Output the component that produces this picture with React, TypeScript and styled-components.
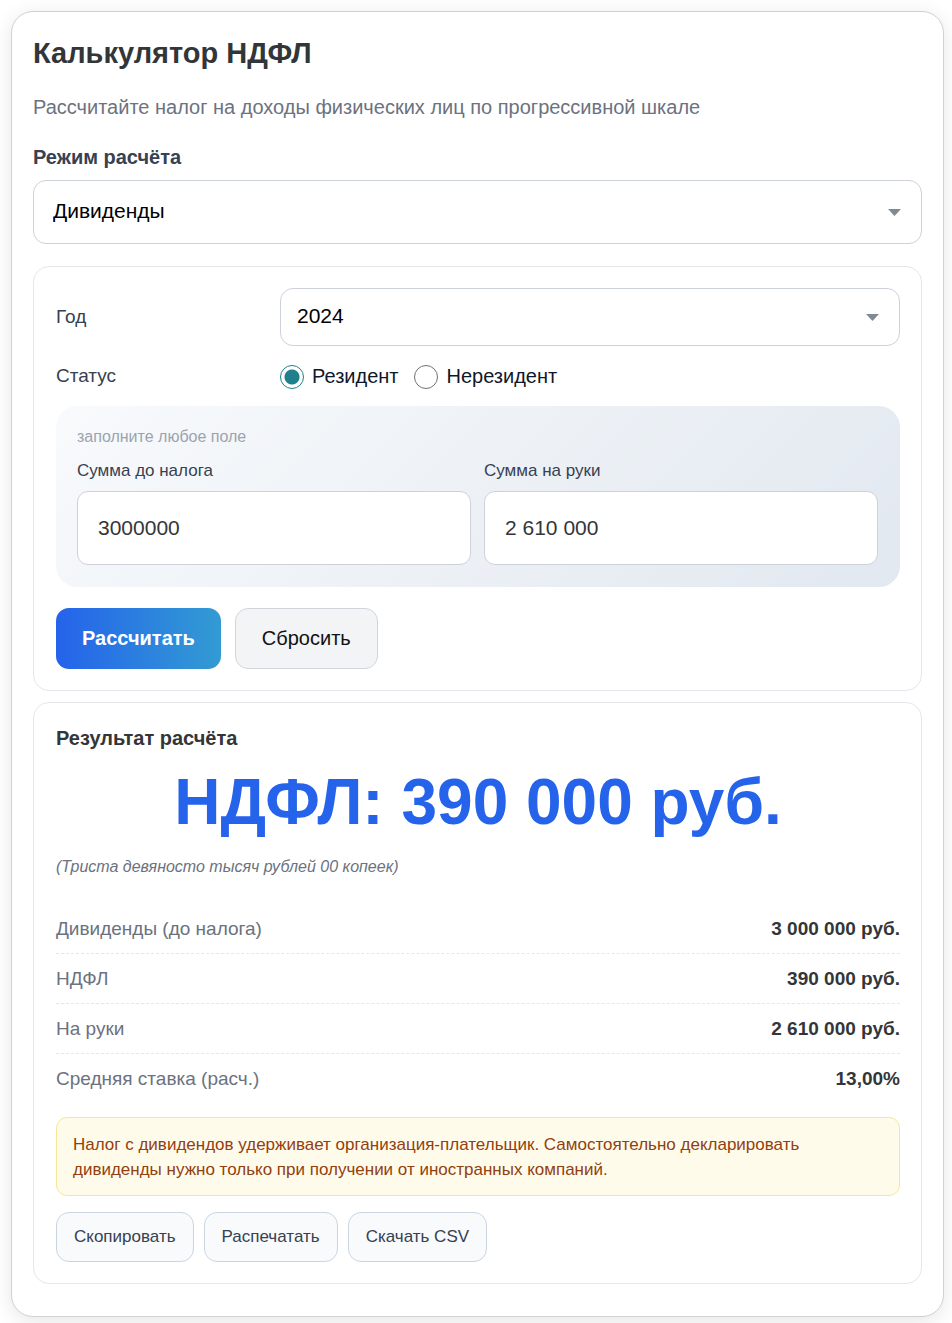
import React, { useState } from 'react';
import styled, { createGlobalStyle } from 'styled-components';

const GlobalStyle = createGlobalStyle`
  *, *::before, *::after { box-sizing: border-box; }
  body {
    margin: 0;
    background: #fff;
    color: #333639;
    font-family: "Liberation Sans", Arial, sans-serif;
  }
  button, input, select { font: inherit; }
`;

const Page = styled.div`
  padding: 11px 8px 6px 11px;
`;

const Card = styled.main`
  padding: 21px 21px 32px;
  background: #fff;
  border: 1px solid #cfd2d4;
  border-radius: 22px;
  box-shadow: 0 4px 20px rgba(0, 0, 0, 0.1);
`;

const Title = styled.h1`
  margin: 0;
  font-size: 29px;
  line-height: 40px;
  font-weight: 700;
`;

const Subtitle = styled.p`
  margin: 20px 0 0;
  color: #6b7280;
  font-size: 20px;
  line-height: 28px;
`;

const ModeField = styled.div`
  display: flex;
  flex-direction: column;
  gap: 10px;
  margin: 23px 0 22px;
`;

const ModeLabel = styled.label`
  color: #374151;
  font-size: 20px;
  line-height: 26px;
  font-weight: 700;
`;

const SelectBox = styled.div`
  position: relative;
`;

const Select = styled.select<{ $large?: boolean }>`
  appearance: none;
  display: block;
  width: 100%;
  height: ${(p) => (p.$large ? 64 : 58)}px;
  padding: 0 48px 4px ${(p) => (p.$large ? 19 : 16)}px;
  background: #fff;
  color: #000;
  border: 1px solid #cdd1da;
  border-radius: 13px;
  font-size: 21px;
`;

const Arrow = styled.svg`
  position: absolute;
  top: 50%;
  right: 21px;
  width: 13px;
  height: 7px;
  margin-top: -3px;
  fill: #7f8a93;
  pointer-events: none;
`;

const Panel = styled.section`
  padding: 21px;
  padding-left: 22px;
  border: 1px solid #e5e7eb;
  border-radius: 16px;

  & + & {
    margin-top: 11px;
  }
`;

const FormRow = styled.div`
  display: grid;
  grid-template-columns: 210px 1fr;
  gap: 14px;
  align-items: center;
`;

const RowLabel = styled.label`
  color: #374151;
  font-size: 19px;
  line-height: 24px;
`;

const Status = styled.div`
  margin: 17px 0;
`;

const RadioGroup = styled.div`
  display: flex;
  flex-wrap: wrap;
  gap: 16px;
`;

const RadioLabel = styled.label`
  display: flex;
  align-items: flex-end;
  gap: 8px;
  color: #0f172a;
  font-size: 20px;
  line-height: 26px;
`;

const Radio = styled.input`
  appearance: none;
  flex: none;
  width: 24px;
  height: 24px;
  margin: 0;
  background: #fff;
  border: 1px solid #6f7175;
  border-radius: 50%;

  &:checked {
    border-color: #21808d;
    background: radial-gradient(circle, #21808d 7px, #fff 8px);
  }
`;

const Amounts = styled.fieldset`
  margin: 0;
  min-width: 0;
  padding: 21px 22px 22px 21px;
  border: 0;
  border-radius: 21px;
  background: linear-gradient(135deg, #f8fafc, #e2e8f0);
`;

const Hint = styled.p`
  margin: 0 0 13px;
  color: #9ca3af;
  font-size: 16px;
  line-height: 20px;
`;

const AmountGrid = styled.div`
  display: grid;
  grid-template-columns: 1fr 1fr;
  gap: 13px;
`;

const AmountLabel = styled.label`
  display: flex;
  flex-direction: column;
  gap: 9px;
  color: #374151;
  font-size: 17px;
  line-height: 22px;
`;

const AmountInput = styled.input`
  width: 100%;
  height: 74px;
  padding: 0 20px;
  background: #fff;
  color: #333639;
  border: 1px solid #cdd1da;
  border-radius: 11px;
  font-size: 21px;
`;

const Actions = styled.div`
  display: flex;
  flex-wrap: wrap;
  gap: 14px;
  margin-top: 21px;
`;

const Button = styled.button<{ $primary?: boolean }>`
  height: 61px;
  padding: 0 26px;
  border: ${(p) => (p.$primary ? '0' : '1px solid #d1d5db')};
  border-radius: 13px;
  background: ${(p) => (p.$primary ? 'linear-gradient(90deg, #2563eb, #329bd3)' : '#f3f4f6')};
  color: ${(p) => (p.$primary ? '#fff' : '#111')};
  font-size: 20px;
  font-weight: ${(p) => (p.$primary ? 700 : 400)};
  cursor: pointer;
`;

const ResultTitle = styled.h2`
  margin: 0;
  font-size: 20px;
  line-height: 28px;
`;

const Total = styled.p`
  margin: 12px 0 0;
  color: #2563eb;
  font-size: 64px;
  line-height: 76px;
  font-weight: 700;
  text-align: center;
`;

const InWords = styled.p`
  margin: 16px 0 0;
  color: #6b7280;
  font-size: 16px;
  line-height: 22px;
  font-style: italic;
`;

const Breakdown = styled.dl`
  margin: 26px 0 0;
`;

const BreakdownRow = styled.div`
  display: flex;
  justify-content: space-between;
  align-items: center;
  padding: 12px 0;
  font-size: 19px;
  line-height: 25px;

  & + & {
    border-top: 1px dashed #e5e7eb;
  }
`;

const Term = styled.dt`
  color: #6b7280;
`;

const Value = styled.dd`
  margin: 0;
  font-weight: 700;
`;

const Notice = styled.p`
  margin: 14px 0 16px;
  padding: 14px 16px 13px;
  background: #fffbeb;
  color: #92400e;
  border: 1px solid #f7e59a;
  border-radius: 11px;
  font-size: 17px;
  line-height: 25px;
`;

const ExportBar = styled.div`
  display: flex;
  flex-wrap: wrap;
  gap: 10px;
`;

const ExportButton = styled.button`
  height: 50px;
  padding: 0 17px;
  background: #f8fafc;
  color: #374151;
  border: 1px solid #cbd5e1;
  border-radius: 13px;
  font-size: 17px;
  cursor: pointer;
`;

const rows = [
  ['Дивиденды (до налога)', '3 000 000 руб.'],
  ['НДФЛ', '390 000 руб.'],
  ['На руки', '2 610 000 руб.'],
  ['Средняя ставка (расч.)', '13,00%'],
];

function DropArrow() {
  return (
    <Arrow viewBox="0 0 13 7" aria-hidden="true">
      <path d="M0 0H13L6.500 7Z" />
    </Arrow>
  );
}

export default function App() {
  const [status, setStatus] = useState('resident');
  const [gross, setGross] = useState('3000000');
  const [net, setNet] = useState('2 610 000');

  return (
    <>
      <GlobalStyle />
      <Page>
        <Card>
          <Title>Калькулятор НДФЛ</Title>
          <Subtitle>Рассчитайте налог на доходы физических лиц по прогрессивной шкале</Subtitle>
          <ModeField>
            <ModeLabel htmlFor="mode">Режим расчёта</ModeLabel>
            <SelectBox>
              <Select id="mode" $large>
                <option>Дивиденды</option>
              </Select>
              <DropArrow />
            </SelectBox>
          </ModeField>

          <Panel>
            <FormRow>
              <RowLabel htmlFor="year">Год</RowLabel>
              <SelectBox>
                <Select id="year">
                  <option>2024</option>
                </Select>
                <DropArrow />
              </SelectBox>
            </FormRow>
            <Status>
              <FormRow>
                <RowLabel as="span" id="status-label">Статус</RowLabel>
                <RadioGroup role="radiogroup" aria-labelledby="status-label">
                  <RadioLabel>
                    <Radio
                      type="radio"
                      name="status"
                      checked={status === 'resident'}
                      onChange={() => setStatus('resident')}
                    />
                    Резидент
                  </RadioLabel>
                  <RadioLabel>
                    <Radio
                      type="radio"
                      name="status"
                      checked={status === 'nonresident'}
                      onChange={() => setStatus('nonresident')}
                    />
                    Нерезидент
                  </RadioLabel>
                </RadioGroup>
              </FormRow>
            </Status>
            <Amounts>
              <Hint>заполните любое поле</Hint>
              <AmountGrid>
                <AmountLabel>
                  Сумма до налога
                  <AmountInput type="text" value={gross} onChange={(e) => setGross(e.target.value)} />
                </AmountLabel>
                <AmountLabel>
                  Сумма на руки
                  <AmountInput type="text" value={net} onChange={(e) => setNet(e.target.value)} />
                </AmountLabel>
              </AmountGrid>
            </Amounts>
            <Actions>
              <Button type="button" $primary>Рассчитать</Button>
              <Button type="button">Сбросить</Button>
            </Actions>
          </Panel>

          <Panel>
            <ResultTitle>Результат расчёта</ResultTitle>
            <Total>НДФЛ: 390 000 руб.</Total>
            <InWords>(Триста девяносто тысяч рублей 00 копеек)</InWords>
            <Breakdown>
              {rows.map(([term, value]) => (
                <BreakdownRow key={term}>
                  <Term>{term}</Term>
                  <Value>{value}</Value>
                </BreakdownRow>
              ))}
            </Breakdown>
            <Notice>
              Налог с дивидендов удерживает организация-плательщик. Самостоятельно декларировать
              дивиденды нужно только при получении от иностранных компаний.
            </Notice>
            <ExportBar>
              <ExportButton type="button">Скопировать</ExportButton>
              <ExportButton type="button">Распечатать</ExportButton>
              <ExportButton type="button">Скачать CSV</ExportButton>
            </ExportBar>
          </Panel>
        </Card>
      </Page>
    </>
  );
}
